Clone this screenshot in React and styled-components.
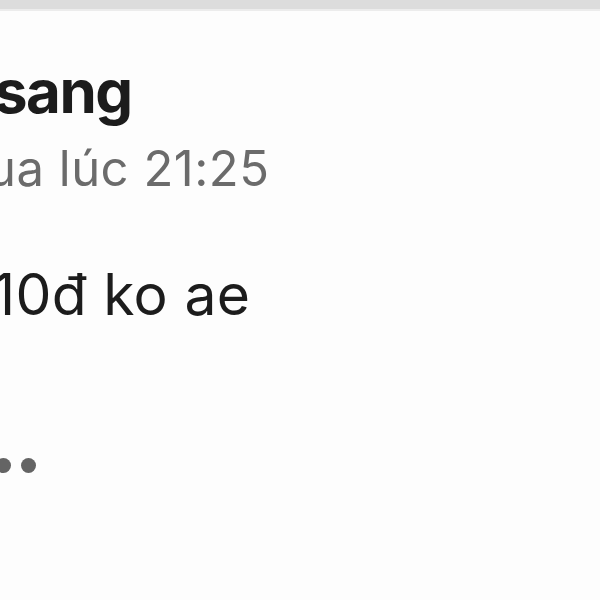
import React from "react";
import styled, { createGlobalStyle } from "styled-components";

const Global = createGlobalStyle`
  html, body { margin: 0; padding: 0; background: #fdfdfd; }
  body { font-family: Inter, "Noto Sans", "Liberation Sans", sans-serif; overflow: hidden; }
`;

const Page = styled.div`
  width: 600px;
  height: 600px;
  overflow: hidden;
  display: flex;
  flex-direction: column;
  background: #fdfdfd;
`;

const TopBar = styled.div`
  height: 9px;
  flex: none;
  background: #dcdcdc;
  border-bottom: 2px solid #ececec;
`;

const Comment = styled.div`
  display: flex;
  flex-direction: column;
  padding-top: 44px;
`;

const Line = styled.div`
  margin-left: ${(p) => p.$shift}px;
  white-space: nowrap;
  font-size: ${(p) => p.$size}px;
  font-weight: ${(p) => p.$weight || 400};
  letter-spacing: ${(p) => p.$track || 0}px;
  color: ${(p) => p.$color || "#1c1c1c"};
  line-height: ${(p) => p.$lh}px;
  margin-top: ${(p) => p.$mt || 0}px;
`;

const Dots = styled.div`
  display: flex;
  gap: 10px;
  margin-left: -4px;
  margin-top: 128px;
`;

const Dot = styled.span`
  display: block;
  flex: none;
  width: 15px;
  height: 15px;
  border-radius: 50%;
  background: #646464;
`;

export default function App() {
  return (
    <Page>
      <Global />
      <TopBar />
      <Comment>
        <Line $shift={-6} $size={60} $weight={700} $track={-1.5} $lh={72}>sang</Line>
        <Line $shift={-13} $size={49} $track={0.5} $color="#6b6b6b" $lh={60} $mt={12}>ua lúc 21:25</Line>
        <Line $shift={-8} $size={57} $track={0.3} $lh={70} $mt={61}>10đ ko ae</Line>
        <Dots>
          <Dot />
          <Dot />
        </Dots>
      </Comment>
    </Page>
  );
}
